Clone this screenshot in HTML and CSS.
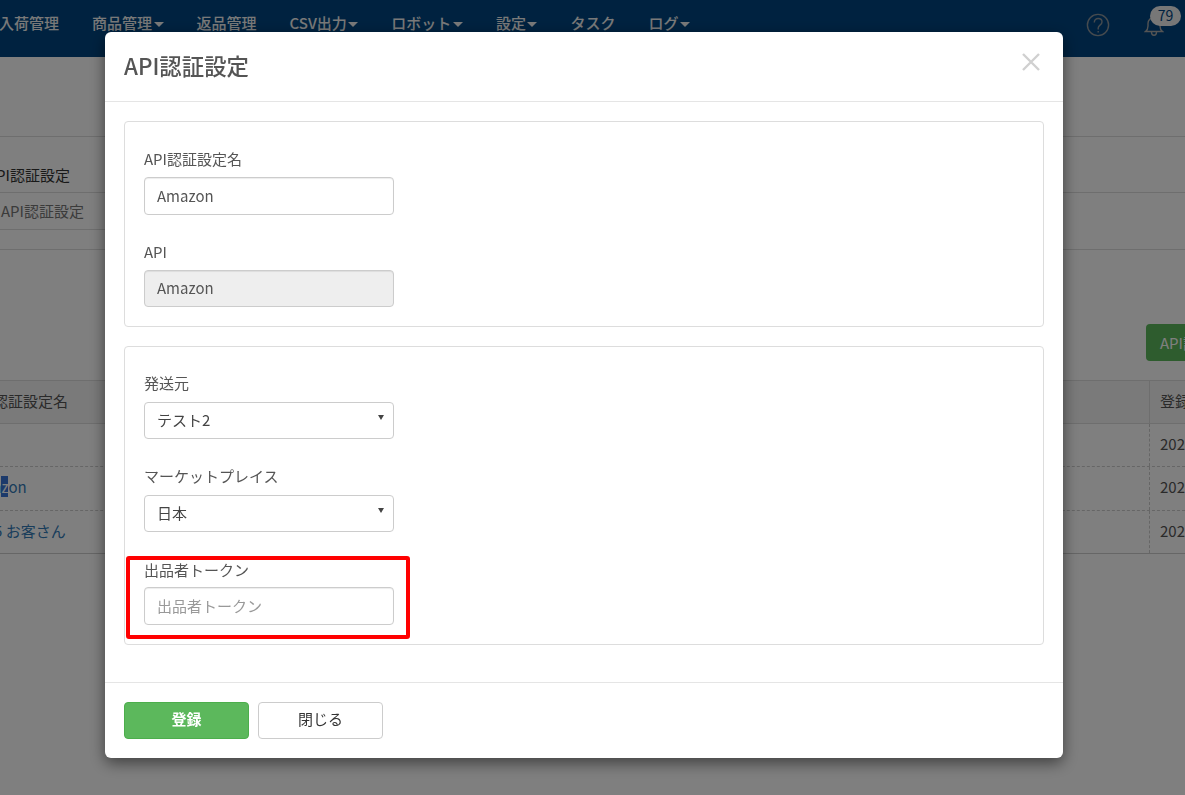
FILE: index.html
```html
<!DOCTYPE html>
<html lang="ja">
<head>
<meta charset="utf-8">
<title>API認証設定</title>
<link rel="stylesheet" href="styles.css">
</head>
<body>
<div class="page">
  <header class="nav">
    <nav class="nav-items">
      <span class="nav-item">入荷管理</span>
      <span class="nav-item caret">商品管理</span>
      <span class="nav-item">返品管理</span>
      <span class="nav-item caret">CSV出力</span>
      <span class="nav-item caret">ロボット</span>
      <span class="nav-item caret">設定</span>
      <span class="nav-item">タスク</span>
      <span class="nav-item caret">ログ</span>
    </nav>
    <div class="nav-icons">
      <svg class="help" width="24" height="24" viewBox="0 0 24 24" fill="none" stroke="#8d969d" stroke-width="1.4"><circle cx="12" cy="12" r="10.6"/><path d="M8.3 9.4c0-2.3 1.7-3.9 3.9-3.9s3.8 1.5 3.8 3.4c0 1.6-.9 2.4-2 3.2-1.1.8-1.8 1.5-1.8 3v1.3"/><path d="M12.2 18v1.6"/></svg>
      <div class="bell-wrap">
        <svg width="20" height="22" viewBox="0 0 20 22" fill="none" stroke="#a8a8a8" stroke-width="1.4"><path d="M1.5 16.5c1.6-1.2 2.5-2.8 2.5-5.5V8.5C4 5 6.500 2.500 10 2.500s6 2.500 6 6V11c0 2.700.9 4.300 2.500 5.500z"/><path d="M7.500 17c0 2 1 3.200 2.500 3.200s2.500-1.200 2.500-3.200"/></svg>
        <span class="badge">79</span>
      </div>
    </div>
  </header>
  <main class="content">
    <div class="crumb-title">API認証設定</div>
    <div class="crumb-link">API認証設定</div>
    <div class="actions"><span class="add-btn">API認証設定を追加</span></div>
    <div class="table">
      <div class="row head"><span class="c-name">API認証設定名</span><span class="c-date">登録日時</span></div>
      <div class="row"><span class="c-name"></span><span class="c-date">2021/01/01</span></div>
      <div class="row"><span class="c-name link">Ama<span class="sel">z</span>on</span><span class="c-date">2021/01/01</span></div>
      <div class="row"><span class="c-name link shift">テスト5 お客さん</span><span class="c-date">2021/01/01</span></div>
    </div>
  </main>
</div>

<div class="overlay">
  <section class="modal">
    <div class="modal-head">
      <h1 class="modal-title">API認証設定</h1>
      <svg class="close" width="18" height="18" viewBox="0 0 18 18" stroke="#d0d0d0" stroke-width="2.400"><path d="M1 1l16 16M17 1L1 17"/></svg>
    </div>
    <div class="modal-body">
      <div class="card first">
        <div class="field">
          <label class="label">API認証設定名</label>
          <div class="control tall">Amazon</div>
        </div>
        <div class="field">
          <label class="label">API</label>
          <div class="control disabled">Amazon</div>
        </div>
      </div>
      <div class="card second">
        <div class="field">
          <label class="label wide">発送元</label>
          <div class="control select">テスト2</div>
        </div>
        <div class="field">
          <label class="label wide">マーケットプレイス</label>
          <div class="control select">日本</div>
        </div>
        <div class="field">
          <label class="label low">出品者トークン</label>
          <div class="control tall placeholder">出品者トークン</div>
          <div class="highlight"></div>
        </div>
      </div>
    </div>
    <div class="modal-foot">
      <button class="btn primary">登録</button>
      <button class="btn">閉じる</button>
    </div>
  </section>
</div>
</body>
</html>
```
FILE: styles.css
```css
* { box-sizing: border-box; }
html, body { margin: 0; height: 100%; overflow: hidden; }
body {
  font-family: "Noto Sans CJK JP", "Noto Sans", sans-serif;
  font-size: 15px;
  color: #555;
  background: #fff;
}
.page { height: 795px; overflow: hidden; }
.nav {
  height: 57px;
  background: #004580;
  display: flex;
  justify-content: space-between;
  color: #fff;
}
.nav-items { display: flex; gap: 33px; padding-top: 13px; margin-left: -1px; }
.nav-item { line-height: 20px; font-weight: 500; white-space: nowrap; color: #f2f2f2; }
.caret::after {
  content: "";
  display: inline-block;
  border: 5px solid transparent;
  border-top-color: #f2f2f2;
  border-bottom: 0;
  margin-left: 1.5px;
  vertical-align: 2px;
}
.nav-icons { display: flex; align-items: flex-start; }
.help { margin: 13px 34px 0 0; }
.bell-wrap { position: relative; width: 41px; height: 57px; padding-top: 15px; }
.bell-wrap svg { display: block; }
.badge {
  position: absolute;
  left: 6px; top: 6px;
  width: 31px; height: 20px;
  border-radius: 10px;
  background: #eee;
  color: #004580;
  font-size: 14px;
  line-height: 19px;
  text-align: center;
}
.content { height: 738px; padding-top: 79px; }
.crumb-title {
  border-top: 1px solid #ddd;
  border-bottom: 1px solid #ddd;
  height: 57px;
  padding-top: 28px;
  line-height: 20px;
  text-indent: -13px;
  color: #333;
}
.crumb-link {
  height: 37px;
  border-bottom: 1px solid #ddd;
  padding: 8px 0 0 1px;
  line-height: 20px;
  color: #777;
  width: 110px;
}
.actions { display: flex; justify-content: flex-end; padding-top: 74px; margin-top: 19px; border-top: 1px solid #ddd; height: 131px; overflow: hidden; }
.add-btn {
  height: 37px;
  width: 39px;
  background: #5cb85c;
  color: #fff;
  border-radius: 4px 0 0 4px;
  padding: 9px 0 0 14px;
  line-height: 20px;
  white-space: nowrap;
  overflow: hidden;
}
.table { border-top: 1px solid #ddd; border-bottom: 1px solid #ccc; }
.row {
  display: flex;
  height: 44px;
  border-top: 1px dashed #ccc;
  justify-content: space-between;
  line-height: 39px;
  color: #555;
}
.row:nth-child(4) { height: 43px; }
.row.head { background: #f5f5f5; border-top: 0; border-bottom: 1px solid #ddd; height: 43px; line-height: 40px; }
.row.head + .row { border-top: 0; height: 42px; }
.c-name { margin-left: -30px; white-space: nowrap; }
.shift { margin-left: -51px; }
.c-date { width: 36px; border-left: 1px dashed #ccc; padding-left: 10px; white-space: nowrap; overflow: hidden; }
.head .c-date { border-left: 1px solid #ddd; }
.link { color: #337ab7; }
.sel { background: #3875d7; color: #fff; }

.overlay { position: fixed; inset: 0; background: rgba(0, 0, 0, .5); }
.modal {
  position: absolute;
  left: 105px; top: 32px;
  width: 958px; height: 726px;
  background: #fff;
  border-radius: 6px;
  box-shadow: 0 5px 15px rgba(0, 0, 0, .5);
  display: flex;
  flex-direction: column;
}
.modal-head {
  height: 70px;
  border-bottom: 1px solid #e5e5e5;
  padding: 0 23px 0 19px;
  display: flex;
  align-items: center;
  justify-content: space-between;
}
.modal-title { margin: 0; font-size: 22.400px; font-weight: 500; color: #555; line-height: 30px; padding-bottom: 3px; }
.close { margin-bottom: 10px; }
.modal-body { flex: 1; padding: 19px 19px 0; display: flex; flex-direction: column; gap: 19px; }
.card { border: 1px solid #ddd; border-radius: 4px; padding: 27px 19px 0; }
.first { height: 206px; padding-top: 28px; }
.second { height: 299px; }
.field { position: relative; margin-bottom: 28px; }
.label { display: block; line-height: 18px; margin-bottom: 9px; color: #555; }
.label.wide { margin-bottom: 10px; }
.label.low { line-height: 20px; margin-bottom: 7px; }
.control {
  width: 250px;
  height: 37px;
  border: 1px solid #ccc;
  border-radius: 4px;
  padding: 0 12px;
  line-height: 33px;
  color: #555;
  box-shadow: inset 0 1px 1px rgba(0, 0, 0, .075);
}
.tall { height: 38px; line-height: 36px; }
.disabled { background: #eee; }
.select { position: relative; color: #444; box-shadow: none; }
.select::after {
  content: "";
  position: absolute;
  right: 9px; top: 12px;
  border-left: 3px solid transparent;
  border-right: 3px solid transparent;
  border-top: 5px solid #444;
}
.placeholder { color: #999; }
.highlight {
  position: absolute;
  left: -18px; top: -4px;
  width: 284px; height: 83px;
  border: 4px solid #f00;
  border-radius: 3px;
  pointer-events: none;
}
.modal-foot {
  height: 76px;
  border-top: 1px solid #e5e5e5;
  padding: 19px 19px 0;
  display: flex;
  gap: 9px;
  align-items: flex-start;
}
.btn {
  width: 125px;
  height: 37px;
  border: 1px solid #ccc;
  border-radius: 4px;
  background: #fff;
  color: #333;
  font: 15px/20px "Noto Sans CJK JP", "Noto Sans", sans-serif;
  padding: 0 0 3px;
}
.primary { background: #5cb85c; border-color: #4cae4c; color: #fff; font-weight: 700; }
```
